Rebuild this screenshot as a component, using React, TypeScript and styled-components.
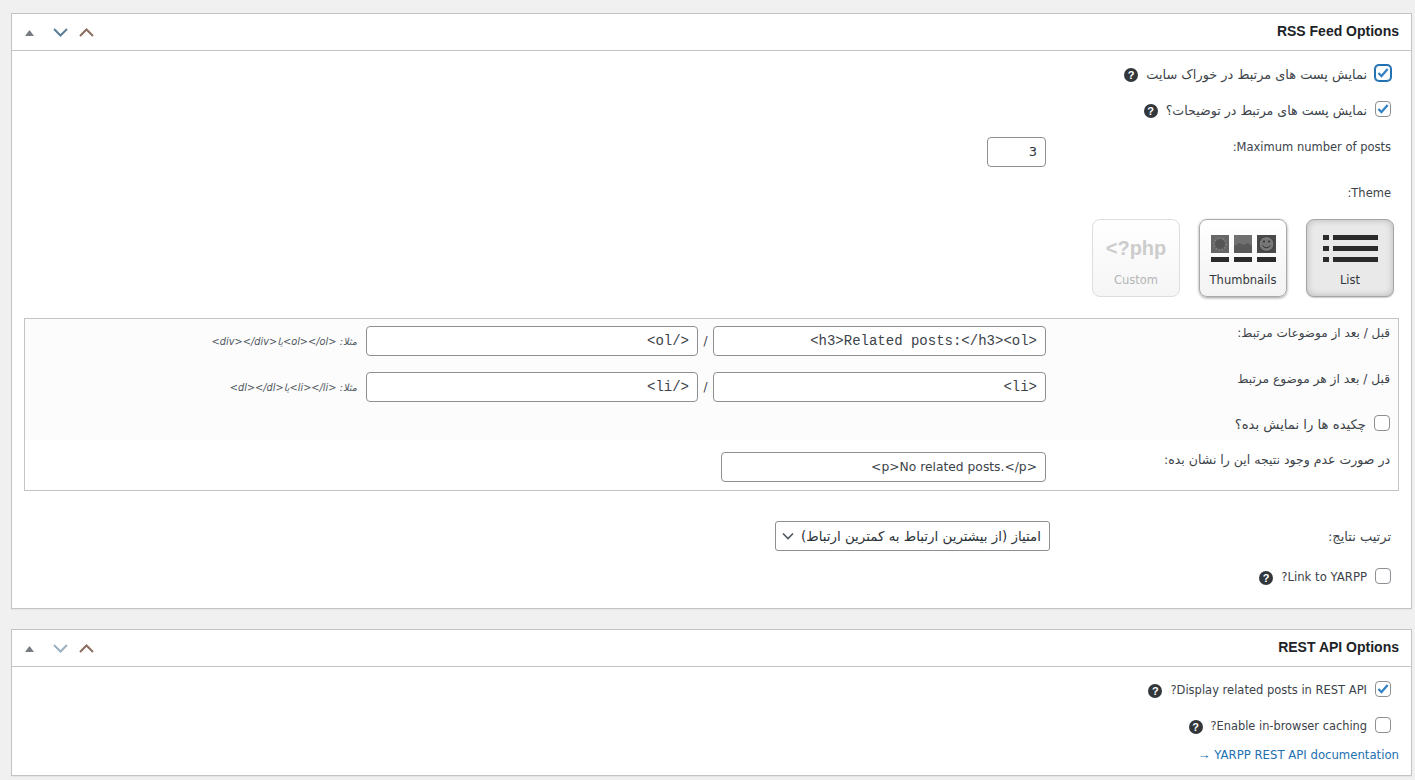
import React from 'react';
import styled, { createGlobalStyle } from 'styled-components';

const Global = createGlobalStyle`
  html, body { margin: 0; padding: 0; background: #f0f0f1; }
  body { font-family: "DejaVu Sans", Tahoma, sans-serif; font-size: 11.5px; color: #3c434a; overflow: hidden; }
  * { box-sizing: border-box; }
`;

const Page = styled.div`
  direction: rtl;
  height: 780px;
  padding: 13px 3px 0 11px;
  display: flex;
  flex-direction: column;
  gap: 20px;
`;

const Panel = styled.section`
  background: #fff;
  border: 1px solid #c3c4c7;
  box-shadow: 0 1px 1px rgba(0, 0, 0, 0.04);
`;

const PanelHeader = styled.header`
  height: 37px;
  border-bottom: 1px solid #c3c4c7;
  display: flex;
  align-items: center;
  justify-content: space-between;
  padding: 0 12px 0 4px;
`;

const PanelTitle = styled.h2`
  margin: 0 0 2px;
  font: bold 14px "Liberation Sans", Arial, sans-serif;
  color: #1d2327;
`;

const Arrows = styled.div`
  direction: ltr;
  display: flex;
  align-items: center;
  order: 2;
  margin-top: 1px;
`;

const ArrowBtn = styled.span<{ $gap?: number }>`
  width: 26px;
  height: 20px;
  margin-left: ${p => p.$gap ?? 0}px;
  display: flex;
  align-items: center;
  justify-content: center;
`;

const PanelBody = styled.div<{ $pad: string }>`
  padding: ${p => p.$pad};
`;

const CheckRow = styled.label<{ $h?: number; $size?: number }>`
  display: flex;
  align-items: center;
  gap: 8px;
  height: ${p => p.$h ?? 36}px;
  padding: 4px 8px 0 0;
  font-size: ${p => p.$size ?? 11.5}px;
  line-height: 1;
`;

const Box = styled.span<{ $focus?: boolean }>`
  width: 16px;
  height: 16px;
  margin-top: -4px;
  flex: none;
  background: #fff;
  border: 1px solid #8c8f94;
  border-radius: 4px;
  display: flex;
  align-items: center;
  justify-content: center;
  ${p => p.$focus && `
    border-color: #2271b1;
    box-shadow: 0 0 0 1px #2271b1;
  `}
`;

const HelpDot = styled.span`
  width: 14px;
  height: 14px;
  flex: none;
  border-radius: 50%;
  background: #32373c;
  color: #fff;
  font: bold 11px/14px "Liberation Sans", Arial, sans-serif;
  text-align: center;
`;

const FieldRow = styled.div<{ $h: number; $tint?: boolean }>`
  display: flex;
  height: ${p => p.$h}px;
  background: ${p => (p.$tint ? '#fcfcfc' : 'transparent')};
`;

const FieldLabel = styled.div<{ $top: number; $w: number; $size?: number }>`
  width: ${p => p.$w}px;
  flex: none;
  padding: ${p => p.$top}px 8px 0 0;
  font-size: ${p => p.$size ?? 11.5}px;
`;

const FieldValue = styled.div<{ $top: number }>`
  display: flex;
  align-items: center;
  align-self: flex-start;
  margin-top: ${p => p.$top}px;
`;

const NumberInput = styled.div`
  width: 59px;
  height: 30px;
  background: #fff;
  border: 1px solid #8c8f94;
  border-radius: 4px;
  padding: 0 8px;
  font: 13px/28px "DejaVu Sans", sans-serif;
  color: #2c3338;
`;

const CodeInput = styled.div<{ $w: number; $plain?: boolean }>`
  width: ${p => p.$w}px;
  height: 30px;
  background: #fff;
  border: 1px solid #8c8f94;
  border-radius: 4px;
  padding: 0 8px;
  font: ${p => (p.$plain
    ? '12.3px/28px "DejaVu Sans", sans-serif'
    : '14px/28px "Liberation Mono", "Courier New", monospace')};
  color: #3c434a;
  white-space: nowrap;
`;

const Slash = styled.span`
  width: 15px;
  text-align: center;
  font-size: 12px;
`;

const Example = styled.span`
  margin-right: 9px;
  font-size: 9.8px;
  font-style: italic;
  color: #50575e;
  white-space: nowrap;
`;

const ThemeRow = styled.div`
  display: flex;
  gap: 19px;
  padding: 0 5px 0 0;
  height: 99px;
`;

const ThemeBtn = styled.div<{ $state: 'on' | 'off' | 'disabled' }>`
  width: 88px;
  height: 78px;
  border-radius: 8px;
  display: flex;
  flex-direction: column;
  align-items: center;
  justify-content: space-between;
  padding: 15px 0 9px;
  font-size: 11.5px;
  ${p => p.$state === 'on' && `
    background: #e9e9e9;
    border: 1px solid #a5a5a5;
    box-shadow: inset 0 0 7px rgba(0,0,0,.22), 0 1px 1px rgba(0,0,0,.2);
    color: #32373c;
  `}
  ${p => p.$state === 'off' && `
    background: linear-gradient(#fff, #f3f3f3);
    border: 1px solid #aaa;
    box-shadow: 0 1px 3px rgba(0,0,0,.4);
    color: #32373c;
  `}
  ${p => p.$state === 'disabled' && `
    background: linear-gradient(#fff, #f5f5f5);
    border: 1px solid #dedede;
    color: #b5b5b5;
  `}
`;

const PhpMark = styled.span`
  direction: ltr;
  font: bold 20px/27px "Liberation Sans", Arial, sans-serif;
  color: #ccc;
`;

const Tmpl = styled.div`
  border: 1px solid #c3c4c7;
  height: 173px;
`;

const SelectBox = styled.div`
  width: 275px;
  height: 30px;
  background: #fff;
  border: 1px solid #8c8f94;
  border-radius: 3px;
  display: flex;
  align-items: center;
  justify-content: space-between;
  padding: 0 8px 0 6px;
  font-size: 13.4px;
  color: #2c3338;
  white-space: nowrap;
`;

const DocLink = styled.a`
  display: block;
  padding-top: 4px;
  color: #2271b1;
  font-size: 11.7px;
  line-height: 14px;
  text-decoration: none;
`;

const LinkArrow = styled.span`
  font: 13px "Liberation Sans", Arial, sans-serif;
`;

const Check = () => (
  <svg width="14" height="14" viewBox="0 0 15 15">
    <path d="M2.6 7.4l3.3 3.4 6.6-7.6" fill="none" stroke="#3582c4" strokeWidth="2.4" />
  </svg>
);

const CheckBox = ({ on, focus }: { on?: boolean; focus?: boolean }) => (
  <Box $focus={focus}>{on && <Check />}</Box>
);

const Tri = () => (
  <svg width="9" height="6" viewBox="0 0 9 6"><path d="M4.5 0l4.5 6H0z" fill="#787c82" /></svg>
);

const Chev = ({ up, color }: { up?: boolean; color: string }) => (
  <svg width="15" height="9" viewBox="0 0 15 9">
    <path d={up ? 'M1 8l6.5-6.5L14 8' : 'M1 1l6.5 6.5L14 1'} fill="none" stroke={color} strokeWidth="2" />
  </svg>
);

const Header = ({ title, down }: { title: string; down: string }) => (
  <PanelHeader>
    <PanelTitle>{title}</PanelTitle>
    <Arrows>
      <ArrowBtn><Tri /></ArrowBtn>
      <ArrowBtn $gap={5}><Chev color={down} /></ArrowBtn>
      <ArrowBtn><Chev up color="#8a6d5f" /></ArrowBtn>
    </Arrows>
  </PanelHeader>
);

const ListIcon = () => (
  <svg width="55" height="27" viewBox="0 0 55 27" fill="#2b2b2b">
    {[0, 11, 22].map(y => (
      <g key={y}>
        <rect x="0" y={y} width="6" height="5" />
        <rect x="10" y={y} width="45" height="5" />
      </g>
    ))}
  </svg>
);

const ThumbsIcon = () => (
  <svg width="65" height="27" viewBox="0 0 65 27">
    <rect x="0" y="0" width="18" height="18" fill="#666" />
    <circle cx="9" cy="9" r="6" fill="#555" stroke="#7a7a7a" strokeWidth="2" strokeDasharray="2 1" />
    <rect x="23" y="0" width="18" height="18" fill="#707070" />
    <path d="M23 11l5-3 5 2 4-2 4 3v7H23z" fill="#595959" />
    <rect x="46" y="0" width="19" height="18" fill="#4a4a4a" />
    <circle cx="55.5" cy="9" r="7.5" fill="#777" stroke="#3c3c3c" />
    <circle cx="53" cy="6.5" r="1.1" fill="#333" />
    <circle cx="58" cy="6.5" r="1.1" fill="#333" />
    <path d="M51.5 10.5q4 4.5 8 0" fill="none" stroke="#333" />
    <rect x="0" y="22" width="18" height="5" fill="#2b2b2b" />
    <rect x="23" y="22" width="18" height="5" fill="#2b2b2b" />
    <rect x="46" y="22" width="19" height="5" fill="#2b2b2b" />
  </svg>
);

const Chevron = () => (
  <svg width="12" height="8" viewBox="0 0 12 8">
    <path d="M1 1.5l5 5 5-5" fill="none" stroke="#50575e" strokeWidth="1.6" />
  </svg>
);

export default function App() {
  return (
    <Page>
      <Global />
      <Panel>
        <Header title="RSS Feed Options" down="#5b7f99" />
        <PanelBody $pad="4px 12px 14px 12px">
          <CheckRow $size={12.9}>
            <CheckBox on focus />
            نمایش پست های مرتبط در خوراک سایت
            <HelpDot>?</HelpDot>
          </CheckRow>
          <CheckRow $size={12.6}>
            <CheckBox on />
            نمایش پست های مرتبط در توضیحات؟
            <HelpDot>?</HelpDot>
          </CheckRow>
          <FieldRow $h={53}>
            <FieldLabel $top={13} $w={353}>Maximum number of posts:</FieldLabel>
            <FieldValue $top={10}><NumberInput>3</NumberInput></FieldValue>
          </FieldRow>
          <FieldRow $h={39}>
            <FieldLabel $top={6} $w={353}>Theme:</FieldLabel>
          </FieldRow>
          <ThemeRow>
            <ThemeBtn $state="on"><ListIcon />List</ThemeBtn>
            <ThemeBtn $state="off"><ThumbsIcon />Thumbnails</ThemeBtn>
            <ThemeBtn $state="disabled"><PhpMark>{'<?php'}</PhpMark>Custom</ThemeBtn>
          </ThemeRow>
          <Tmpl>
            <FieldRow $h={46} $tint>
              <FieldLabel $top={7} $w={352} $size={12}>قبل / بعد از موضوعات مرتبط:</FieldLabel>
              <FieldValue $top={7}>
                <CodeInput $w={333}>{'<h3>Related posts:</h3><ol>'}</CodeInput>
                <Slash>/</Slash>
                <CodeInput $w={332}>{'</ol>'}</CodeInput>
                <Example>مثلا: {'<ol></ol>'}یا{'<div></div>'}</Example>
              </FieldValue>
            </FieldRow>
            <FieldRow $h={46} $tint>
              <FieldLabel $top={7} $w={352} $size={12.2}>قبل / بعد از هر موضوع مرتبط</FieldLabel>
              <FieldValue $top={7}>
                <CodeInput $w={333}>{'<li>'}</CodeInput>
                <Slash>/</Slash>
                <CodeInput $w={332}>{'</li>'}</CodeInput>
                <Example>مثلا: {'<li></li>'}یا{'<dl></dl>'}</Example>
              </FieldValue>
            </FieldRow>
            <FieldRow $h={29} $tint>
              <CheckRow $h={24} $size={13.2}>
                <CheckBox />
                چکیده ها را نمایش بده؟
              </CheckRow>
            </FieldRow>
            <FieldRow $h={50}>
              <FieldLabel $top={12} $w={352} $size={12.5}>در صورت عدم وجود نتیجه این را نشان بده:</FieldLabel>
              <FieldValue $top={12}>
                <CodeInput $w={325} $plain>{'<p>No related posts.</p>'}</CodeInput>
              </FieldValue>
            </FieldRow>
          </Tmpl>
          <FieldRow $h={67}>
            <FieldLabel $top={38} $w={349} $size={13}>ترتیب نتایج:</FieldLabel>
            <FieldValue $top={30}>
              <SelectBox>امتیاز (از بیشترین ارتباط به کمترین ارتباط)<Chevron /></SelectBox>
            </FieldValue>
          </FieldRow>
          <CheckRow $size={11.7}>
            <CheckBox />
            Link to YARPP?
            <HelpDot>?</HelpDot>
          </CheckRow>
        </PanelBody>
      </Panel>
      <Panel>
        <Header title="REST API Options" down="#9ab0c0" />
        <PanelBody $pad="4px 12px 13px 12px">
          <CheckRow>
            <CheckBox on />
            Display related posts in REST API?
            <HelpDot>?</HelpDot>
          </CheckRow>
          <CheckRow $size={11.4}>
            <CheckBox />
            Enable in-browser caching?
            <HelpDot>?</HelpDot>
          </CheckRow>
          <DocLink href="#">YARPP REST API documentation <LinkArrow>→</LinkArrow></DocLink>
        </PanelBody>
      </Panel>
    </Page>
  );
}
